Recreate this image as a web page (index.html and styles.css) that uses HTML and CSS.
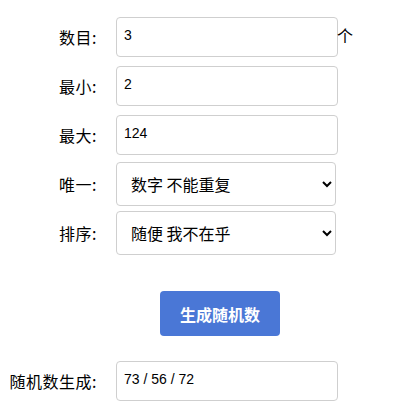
FILE: index.html
```html
<!DOCTYPE html>
<html lang="zh">
<head>
<meta charset="utf-8">
<link rel="stylesheet" href="styles.css">
</head>
<body>
<form class="form">
  <div class="row r1">
    <label class="lbl">数目:</label>
    <input class="field" type="text" value="3">
    <span class="unit">个</span>
  </div>
  <div class="row r2">
    <label class="lbl">最小:</label>
    <input class="field" type="text" value="2">
  </div>
  <div class="row r3">
    <label class="lbl">最大:</label>
    <input class="field" type="text" value="124">
  </div>
  <div class="row r4">
    <label class="lbl">唯一:</label>
    <select class="sel"><option>数字 不能重复</option></select>
  </div>
  <div class="row r5">
    <label class="lbl">排序:</label>
    <select class="sel"><option>随便 我不在乎</option></select>
  </div>
  <div class="btnrow">
    <button type="button" class="btn">生成随机数</button>
  </div>
  <div class="row r6">
    <label class="lbl">随机数生成:</label>
    <input class="field" type="text" value="73 / 56 / 72">
  </div>
</form>
</body>
</html>
```
FILE: styles.css
```css
html, body {
  margin: 0;
  padding: 0;
  background: #fff;
}
body {
  font-family: "Noto Sans CJK SC", "Microsoft YaHei", sans-serif;
  color: #000;
}
.form {
  padding-top: 17px;
  display: flex;
  flex-direction: column;
}
.row {
  display: flex;
  align-items: center;
}
.r2, .r3 { margin-top: 9px; }
.r4 { margin-top: 7px; }
.r5 { margin-top: 5px; }
.lbl {
  text-align: right;
  font-size: 16px;
  letter-spacing: 0.5px;
  padding-right: 19px;
  box-sizing: border-box;
  width: 116px;
  line-height: 20px;
}
.field {
  box-sizing: border-box;
  width: 222px;
  height: 40px;
  margin: 0;
  border: 1px solid #cfcfcf;
  border-radius: 4px;
  padding: 0 7px 4px;
  font-family: "Liberation Sans", Arial, sans-serif;
  font-size: 14px;
  color: #000;
  outline: none;
}
.unit {
  font-size: 16px;
  margin-left: -1px;
  margin-top: -5px;
}
.sel {
  box-sizing: border-box;
  width: 220px;
  height: 44px;
  margin: 0;
  border: 1px solid #cfcfcf;
  border-radius: 4px;
  padding: 0 10px;
  background: #fff;
  font-family: "Noto Sans CJK SC", sans-serif;
  font-size: 16px;
  color: #000;
  outline: none;
}
.btnrow {
  display: flex;
  padding-left: 160px;
  margin-top: 36px;
}
.btn {
  width: 120px;
  height: 45px;
  border: none;
  border-radius: 4px;
  background: #4a77d6;
  color: #fff;
  font-family: "Noto Sans CJK SC", sans-serif;
  font-size: 16px;
  font-weight: bold;
  padding: 0;
}
.r6 { margin-top: 25px; }
```
